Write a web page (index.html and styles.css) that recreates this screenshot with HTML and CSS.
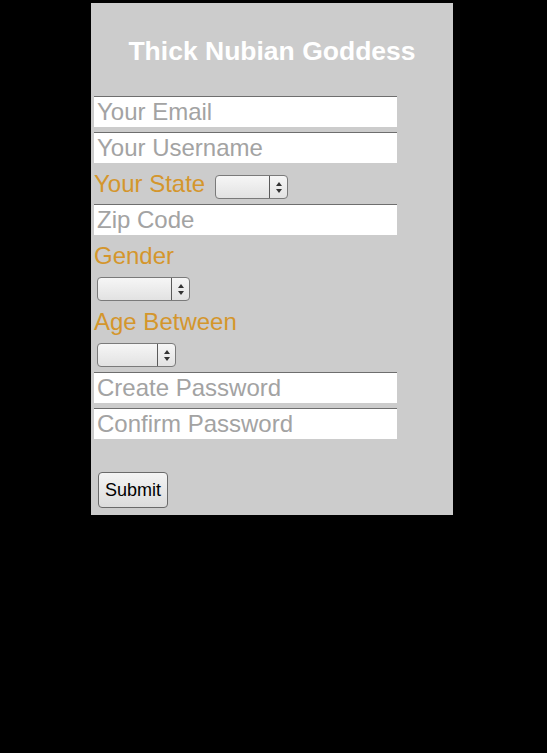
FILE: index.html
```html
<!DOCTYPE html>
<html>
<head>
<meta charset="utf-8">
<title>Thick Nubian Goddess</title>
<link rel="stylesheet" href="styles.css">
</head>
<body>
<div class="panel">
  <h1 class="title">Thick Nubian Goddess</h1>
  <form class="form">
    <input class="field" type="text" placeholder="Your Email">
    <input class="field" type="text" placeholder="Your Username">
    <div class="state-row">
      <label class="label label-inline">Your State</label>
      <span class="sel sel-state"><select class="sel-native"></select><span class="sel-btn"><span class="arr-up"></span><span class="arr-down"></span></span></span>
    </div>
    <input class="field field-zip" type="text" placeholder="Zip Code">
    <label class="label label-block">Gender</label>
    <span class="sel sel-gender"><select class="sel-native"></select><span class="sel-btn"><span class="arr-up"></span><span class="arr-down"></span></span></span>
    <label class="label label-block">Age Between</label>
    <span class="sel sel-age"><select class="sel-native"></select><span class="sel-btn"><span class="arr-up"></span><span class="arr-down"></span></span></span>
    <input class="field field-pw" type="password" placeholder="Create Password">
    <input class="field" type="password" placeholder="Confirm Password">
    <button class="submit" type="button">Submit</button>
  </form>
</div>
</body>
</html>
```
FILE: styles.css
```css
html, body {
  margin: 0;
  padding: 0;
  background: #000;
}
body {
  font-family: "Liberation Sans", Arial, sans-serif;
}
.panel {
  width: 356px;
  margin: 3px 0 0 91px;
  padding: 0 3px 7px 3px;
  background: #cccccc;
}
.title {
  margin: 0;
  height: 93px;
  box-sizing: border-box;
  padding-top: 33px;
  font-size: 26.5px;
  line-height: 30px;
  font-weight: bold;
  color: #ffffff;
  text-align: center;
}
.form {
  display: flex;
  flex-direction: column;
  align-items: flex-start;
}
.field {
  display: block;
  box-sizing: border-box;
  width: 303px;
  height: 31px;
  margin: 0 0 5px 0;
  padding: 0 3px;
  border: none;
  border-top: 1px solid #6e6e6e;
  background: #fff;
  font-family: "Liberation Sans", Arial, sans-serif;
  font-size: 24px;
  color: #333;
  outline: none;
}
.field::placeholder {
  color: #a3a3a3;
  opacity: 1;
}
.field-zip { margin-bottom: 7px; }
.field-pw { margin-top: 5px; }
.label {
  font-size: 24px;
  line-height: 28px;
  color: #d4962c;
}
.state-row {
  display: flex;
  align-items: flex-start;
  height: 36px;
}
.label-inline {
  margin-top: 2px;
}
.label-block {
  display: block;
}
.sel {
  display: flex;
  box-sizing: border-box;
  height: 24px;
  border: 1px solid #7a7a7a;
  border-radius: 4px;
  background: linear-gradient(#f6f6f6, #e2e2e2);
  margin-top: 7px;
}
.sel-state {
  width: 73px;
  margin-left: 10px;
}
.sel-gender {
  width: 93px;
  margin-left: 3px;
  margin-bottom: 7px;
}
.sel-age {
  width: 79px;
  margin-left: 3px;
}
.sel-native {
  flex: 1;
  min-width: 0;
  appearance: none;
  -webkit-appearance: none;
  border: none;
  background: transparent;
  margin: 0;
  padding: 0;
  outline: none;
}
.sel-btn {
  width: 17px;
  border-left: 1px solid #5a5a5a;
  display: flex;
  flex-direction: column;
  align-items: center;
  justify-content: center;
  gap: 3px;
}
.arr-up {
  width: 0;
  height: 0;
  border-left: 3px solid transparent;
  border-right: 3px solid transparent;
  border-bottom: 4px solid #333;
}
.arr-down {
  width: 0;
  height: 0;
  border-left: 3px solid transparent;
  border-right: 3px solid transparent;
  border-top: 4px solid #333;
}
.submit {
  box-sizing: border-box;
  width: 70px;
  height: 36px;
  margin: 28px 0 0 4px;
  padding: 0;
  border: 1px solid #6a6a6a;
  border-radius: 4px;
  background: linear-gradient(#f4f4f4, #dcdcdc);
  font-family: "Liberation Sans", Arial, sans-serif;
  font-size: 18px;
  color: #000;
}
```
